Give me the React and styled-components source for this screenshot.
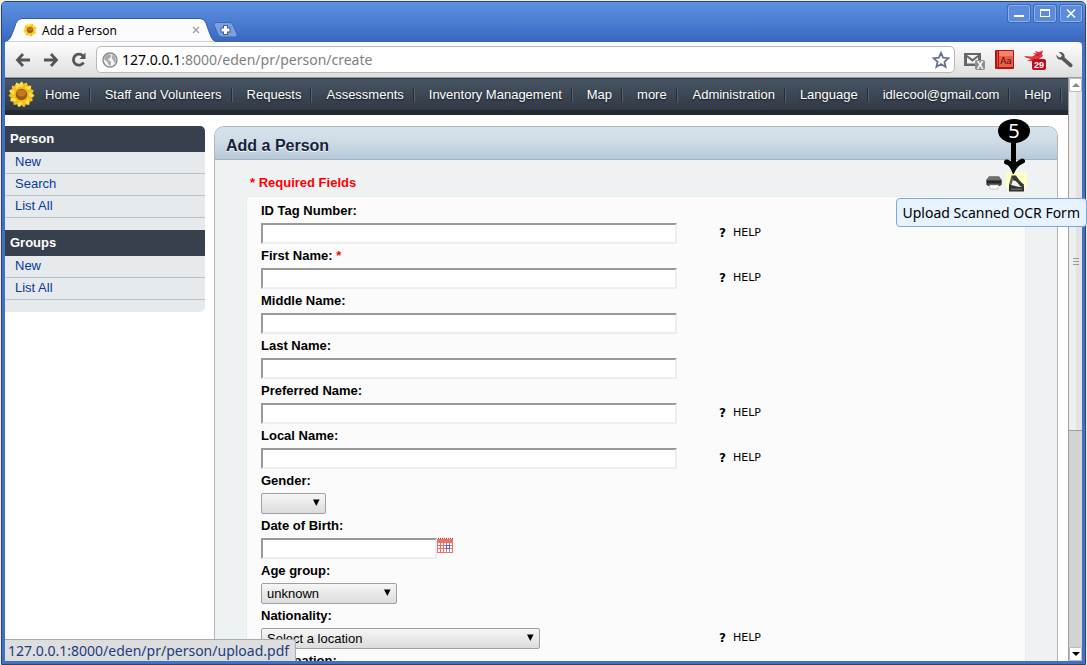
import React from 'react';
import styled, { createGlobalStyle } from 'styled-components';

const GlobalStyle = createGlobalStyle`
  * {
    box-sizing: border-box;
  }

  body {
    margin: 0;
    background: #ecebe6;
    color: #000;
    font-family: 'Liberation Sans', Arial, sans-serif;
    font-size: 13px;
  }

  button, input, select {
    margin: 0;
    padding: 0;
    font: inherit;
    color: inherit;
  }

  svg {
    display: block;
    flex: none;
  }
`;

/* ---------- browser window ---------- */

const Window = styled.div`
  position: relative;
  display: flex;
  flex-direction: column;
  height: 100vh;
  padding: 0 3px 3px;
  background: #4070c8;
  border: 1px solid #34445f;
  border-radius: 5px 5px 0 0;
  background-clip: padding-box;
`;

const Desktop = styled.div`
  height: 100vh;
  padding: 1px 1px 0;
  ${Window} {
    height: 100%;
  }
`;

const TitleBar = styled.div`
  display: flex;
  align-items: flex-end;
  height: 40px;
  margin: 0 -3px;
  padding-left: 3px;
  background: linear-gradient(#5d92e0, #4070c8 80%, #3a66ba);
  border-radius: 4px 4px 0 0;
`;

const Tab = styled.div`
  position: relative;
  display: flex;
  align-items: center;
  width: 211px;
  height: 24px;
  padding: 0 14px 0 18px;
  font-family: 'Noto Sans', sans-serif;
  font-size: 12px;
`;

const TabShape = styled.svg`
  position: absolute;
  left: 0;
  bottom: 0;
`;

const TabTitle = styled.span`
  position: relative;
  flex: 1;
  padding-left: 5px;
  white-space: nowrap;
`;

const TabIcon = styled.span`
  position: relative;
`;

const PlainButton = styled.button`
  display: flex;
  align-items: center;
  justify-content: center;
  background: none;
  border: 0;
  cursor: pointer;
`;

const TabClose = styled(PlainButton)`
  position: relative;
  width: 12px;
  height: 12px;
`;

const NewTab = styled(PlainButton)`
  align-self: flex-end;
  margin: 0 0 4px -4px;
`;

const WindowButtons = styled.div`
  display: flex;
  gap: 4px;
  align-self: flex-start;
  margin: 3px 3px 0 auto;
`;

const WindowButton = styled(PlainButton)`
  width: 22px;
  height: 17px;
  background: #5c8bdb;
  border: 1px solid #8db0ea;
  border-radius: 2px;
  box-shadow: 0 0 0 1px #3c68b8;
`;

const Toolbar = styled.div`
  display: flex;
  align-items: center;
  height: 36px;
  padding: 0 9px 0 10px;
  background: linear-gradient(#fdfdfd, #dedede);
  border-bottom: 1px solid #9a9fa8;
  border-radius: 0 4px 0 0;
`;

const NavButtons = styled.div`
  display: flex;
  gap: 12px;
`;

const AddressBar = styled.div`
  display: flex;
  flex: 1;
  align-items: center;
  height: 27px;
  margin: 0 9px;
  padding: 0 4px 0 5px;
  background: #fff;
  border: 1px solid #b9b9b9;
  border-radius: 5px;
  font-family: 'Noto Sans', sans-serif;
  font-size: 14px;
`;

const Url = styled.span`
  flex: 1;
  padding-left: 4px;
  line-height: 24px;
  color: #808080;

  b {
    color: #000;
    font-weight: normal;
  }
`;

const Extensions = styled.div`
  display: flex;
  align-items: center;
  gap: 10px;
`;

const Viewport = styled.div`
  display: flex;
  flex: 1;
  min-height: 0;
  background: #fff;
`;

const Page = styled.div`
  flex: 1;
  min-width: 0;
  overflow: hidden;
`;

const ScrollBar = styled.div`
  display: flex;
  flex-direction: column;
  width: 14px;
  background: #d3d3d3;
  border-left: 1px solid #a0a0a0;
`;

const ScrollArrow = styled(PlainButton)`
  height: 14px;
  background: #fff;
  border: 1px solid #bbb;
  border-radius: 2px;
`;

const ScrollTrack = styled.div`
  flex: 1;
`;

const ScrollThumb = styled.div`
  display: flex;
  align-items: center;
  justify-content: center;
  height: 61%;
  background: linear-gradient(90deg, #efefef 50%, #e3e3e3 50%);
  border-bottom: 1px solid #a0a0a0;
`;

const StatusBubble = styled.div`
  position: absolute;
  left: 3px;
  bottom: 3px;
  padding: 0 6px 0 3px;
  line-height: 21px;
  background: #dedede;
  border: solid #a7abb5;
  border-width: 1px 1px 0 0;
  border-radius: 0 3px 0 0;
  color: #1d3c7d;
  font-family: 'Noto Sans', sans-serif;
  font-size: 14px;
`;

const Tooltip = styled.div`
  position: absolute;
  top: 196px;
  right: -2px;
  padding: 0 6px;
  line-height: 27px;
  background: #e6f2fe;
  border: 1px solid #7ba7da;
  border-radius: 4px;
  font-family: 'Noto Sans', sans-serif;
  font-size: 14px;
  white-space: nowrap;
`;

const Marker = styled.svg`
  position: absolute;
  top: 116px;
  right: 54px;
`;

/* ---------- site menu ---------- */

const MenuBar = styled.nav`
  display: flex;
  align-items: center;
  height: 37px;
  padding: 0 6px 5px 3px;
  background: linear-gradient(#485564, #323945 31px, #232a32 31px);
  border-top: 1px solid #2c3440;
`;

const MenuGroup = styled.div`
  display: flex;

  &:last-child {
    margin-left: auto;
  }
`;

const MenuLink = styled.a`
  display: flex;
  align-items: center;
  padding-left: 14px;
  color: #fff;
  text-decoration: none;
  text-shadow: 0 1px 2px #11161c;
  white-space: nowrap;

  &::after {
    content: '';
    width: 2px;
    height: 14px;
    margin-left: 9px;
    background: linear-gradient(90deg, #252c36 50%, #56616e 50%);
  }
`;

const Logo = styled.a`
  margin-right: -4px;
`;

/* ---------- page content ---------- */

const Content = styled.div`
  display: flex;
  align-items: flex-start;
  gap: 9px;
  padding: 11px 10px 0 0;
`;

const SideMenu = styled.aside`
  flex: 0 0 200px;
  background: #e6eaed;
  border-radius: 0 5px 5px 0;
  overflow: hidden;
`;

const SideHeading = styled.h2`
  margin: 0;
  padding-left: 5px;
  background: #39404d;
  color: #fff;
  font-size: 13px;
  line-height: 26px;
`;

const SideList = styled.ul`
  margin: 0;
  padding: 0 0 12px;
  list-style: none;
`;

const SideItem = styled.li`
  padding-left: 10px;
  border-bottom: 1px solid #b3c1ca;
  line-height: 21px;

  a {
    display: block;
    margin-top: -1px;
    padding-bottom: 1px;
    color: #06399c;
    text-decoration: none;
  }
`;

const Panel = styled.main`
  flex: 1;
  min-width: 0;
  background: #eef2f3;
  border: solid #b3b5b6;
  border-width: 1px 1px 0;
  border-radius: 10px 10px 0 0;
`;

const PanelTitle = styled.h1`
  margin: 0;
  padding: 6px 0 0 11px;
  background: linear-gradient(#d7e3ec, #d0dde7 40%, #b8c9d7);
  border-bottom: 1px solid #9db3c6;
  border-radius: 9px 9px 0 0;
  color: #14213d;
  font-size: 16px;
  line-height: 26px;
  text-shadow: 0 1px 1px #fff;
`;

const FormHeader = styled.div`
  display: flex;
  align-items: center;
  justify-content: space-between;
  height: 36px;
  padding: 8px 30px 0 35px;
`;

const Required = styled.strong`
  color: #f00;
`;

const FormActions = styled.div`
  display: flex;
  align-items: flex-start;
  gap: 2px;
  height: 20px;
`;

const ActionLink = styled.a`
  display: block;
  height: 16px;
  padding: 3px 2px 0;
  background: ${(props) => (props.$active ? '#ffffc4' : 'transparent')};
`;

const Form = styled.form`
  margin: 0 31px;
  padding: 4px 14px 0;
  background: #fbfbfb;
  border: solid #e8ecec;
  border-width: 1px 1px 0;
`;

const Row = styled.div`
  display: grid;
  grid-template-columns: 458px 1fr;
  align-items: center;
  row-gap: 2px;
  padding-bottom: 2px;
`;

const Label = styled.label`
  grid-column: 1 / -1;
  font-weight: bold;
  line-height: 20px;
`;

const Control = styled.div`
  display: flex;
  align-items: flex-start;
`;

const TextInput = styled.input`
  width: ${(props) => props.$width}px;
  height: 21px;
  background: #fff;
  border: 2px solid;
  border-color: #999 #eee #eee #999;
`;

const SelectBox = styled.div`
  position: relative;
  width: ${(props) => props.$width}px;

  select {
    width: 100%;
    height: 21px;
    padding: 0 5px;
    appearance: none;
    background: linear-gradient(#f6f6f6, #dcdcdc);
    border: 1px solid #a0a0a0;
    border-radius: 2px;
    font-size: 13px;
  }

  svg {
    position: absolute;
    top: 6px;
    right: 6px;
    pointer-events: none;
  }
`;

const HelpLink = styled.a`
  display: flex;
  align-items: center;
  gap: 7px;
  padding-bottom: 2px;
  color: #000;
  font-family: 'DejaVu Sans', sans-serif;
  font-size: 11px;
  line-height: 16px;
  text-decoration: none;

  b {
    font-size: 12px;
  }
`;

/* ---------- drawings ---------- */

const Sunflower = ({ size }) => (
  <svg width={size} height={size} viewBox="0 0 28 28">
    {[0, 24, 48, 72, 96, 120, 144, 168, 192, 216, 240, 264, 288, 312, 336].map((angle, i) => (
      <path
        key={angle}
        d="M10.5 9 L12 2.5 L14 0.5 L16 2.5 L17.5 9Z"
        fill={i % 2 ? '#f3c21d' : '#ffe04a'}
        transform={`rotate(${angle} 14 14)`}
      />
    ))}
    <circle cx="14" cy="14" r="8" fill="#f2bd1c" />
    <circle cx="14" cy="14" r="6" fill="#9c5a12" />
    <ellipse cx="14" cy="12.5" rx="4.5" ry="3.5" fill="#c07a22" />
  </svg>
);

const BackIcon = () => (
  <svg width="16" height="16" viewBox="0 0 16 16" fill="none" stroke="#555" strokeWidth="2.8">
    <path d="M8 2 L2.5 8 L8 14 M2.5 8 H15" />
  </svg>
);

const ForwardIcon = () => (
  <svg width="16" height="16" viewBox="0 0 16 16" fill="none" stroke="#555" strokeWidth="2.8">
    <path d="M8 2 L13.5 8 L8 14 M13.5 8 H1" />
  </svg>
);

const ReloadIcon = () => (
  <svg width="16" height="16" viewBox="0 0 16 16">
    <path d="M12 4 A5.5 5.5 0 1 0 12.6 10.5" fill="none" stroke="#555" strokeWidth="2.8" />
    <path d="M14.5 0.5 V7 H8.5Z" fill="#555" />
  </svg>
);

const GlobeIcon = () => (
  <svg width="16" height="16" viewBox="0 0 16 16">
    <circle cx="8" cy="8" r="7" fill="#f2f2f2" stroke="#8a8a8a" strokeWidth="1.4" />
    <path d="M3 3.5 L7.5 2 L9.5 4 L7.5 6.5 L5.5 7 L8 9 L9 10 L8.5 14 L6.5 12.5 L5 9.5 L2 7Z" fill="#ababab" />
    <path d="M10.5 2.5 L13.5 5 L14 9.5 L12.5 11 L11.5 8.5 L9.8 6.5Z" fill="#ababab" />
  </svg>
);

const StarIcon = () => (
  <svg width="18" height="18" viewBox="0 0 18 18">
    <path
      d="M9 1.8 L11.1 6.7 L16.4 7.2 L12.4 10.7 L13.6 15.9 L9 13.1 L4.4 15.9 L5.6 10.7 L1.6 7.2 L6.9 6.7Z"
      fill="#fff"
      stroke="#66728c"
      strokeWidth="1.8"
    />
  </svg>
);

const MailIcon = () => (
  <svg width="21" height="20" viewBox="0 0 21 20">
    <path d="M0 3 H17 V16 H0Z" fill="#666" />
    <path d="M3 5.5 L8.5 10.5 L14 5.5 V13.5 H3Z" fill="#f4f4f4" />
    <path d="M3 6 L8.5 10.5 L14 6" fill="none" stroke="#666" strokeWidth="2" />
    <path d="M3 5 H14 L8.5 9Z" fill="#f4f4f4" />
    <rect x="11" y="10" width="10" height="10" rx="2" fill="#8e8e8e" />
    <text x="16" y="19" textAnchor="middle" fill="#fff" fontFamily="Liberation Sans" fontWeight="bold" fontSize="10">
      X
    </text>
  </svg>
);

const DictionaryIcon = () => (
  <svg width="19" height="19" viewBox="0 0 19 19">
    <rect width="19" height="19" rx="1" fill="#b81414" />
    <rect x="4" y="1" width="14" height="16" fill="#e65f48" />
    <rect x="4" y="1" width="14" height="5" fill="#f58468" />
    <path d="M2.5 1 V17" stroke="#e8513e" />
    <text x="11" y="14" textAnchor="middle" fill="#5a0808" fontFamily="DejaVu Sans" fontSize="9">
      Aa
    </text>
  </svg>
);

const BirdIcon = () => (
  <svg width="22" height="20" viewBox="0 0 22 20">
    <path
      d="M0 6 L8 6.5 L11 5 L9 3 L12.5 3.5 L11 1 L15 2 L19 0.5 L18 4 L19 6 L15 9 L11 11.5 L3 11 L7 9 L2.5 8Z"
      fill="#dc3a3f"
    />
    <path d="M11 5 L17 3 L14 6Z" fill="#b81e28" />
    <rect x="8" y="9" width="14" height="11" rx="2" fill="#c00d22" />
    <text x="15" y="18" textAnchor="middle" fill="#fff" fontFamily="Liberation Sans" fontWeight="bold" fontSize="9">
      29
    </text>
  </svg>
);

const WrenchIcon = () => (
  <svg width="17" height="17" viewBox="0 0 17 17">
    <path
      d="M2.6 1 L6 4.2 L5 6 L3 6.4 L0.3 3.8 C0.4 7 2 9 5.5 8.8 L13 15.6 A1.8 1.8 0 0 0 16 13 L8.6 6.4 C9.2 3 6.5 0.3 2.6 1Z"
      fill="#575757"
    />
  </svg>
);

const PrinterIcon = () => (
  <svg width="16" height="15" viewBox="0 0 16 15">
    <path d="M3 1.5 H13 L15.8 5 V9.5 L14 11 H2 L0.2 9.5 V5Z" fill="#4a4a4a" />
    <path d="M3 1.5 H13 L15 5 H1Z" fill="#707070" />
    <path d="M1 7 H15" stroke="#262626" strokeWidth="2.4" />
    <path d="M3.5 10 H12.5 L12 14 H4Z" fill="#fff" stroke="#aaa" strokeWidth="0.6" />
  </svg>
);

const ScannerIcon = () => (
  <svg width="17" height="17" viewBox="0 0 17 17">
    <path d="M4.5 5 L12 10 L13 12.5 L2.5 11Z" fill="#f0f0f0" />
    <path d="M3.5 0.5 L8 0.5 C10 4 13 7.5 16 9.5 L15.5 12 L12 11 C10 7.5 7.5 5.5 4.5 5Z" fill="#383838" />
    <path d="M3.5 0.5 L5 5 L3 10.5 L1 10Z" fill="#5a5a5a" />
    <path d="M1 9.5 L11.5 12 L16 11 V16.5 H1Z" fill="#303030" />
    <path d="M3 14.2 H14" stroke="#808080" />
  </svg>
);

const CalendarIcon = () => (
  <svg width="16" height="15" viewBox="0 0 16 15" shapeRendering="crispEdges">
    <path d="M0 1 H16 V15 H0Z" fill="#e9726b" />
    <path d="M1 0.5 H16" stroke="#a83c38" strokeDasharray="1 1" />
    <path d="M1 5 H15 V14 H1Z" fill="#fff" />
    <path d="M1 7.5 H15 M1 10.5 H15 M3.5 5 V14 M6.5 5 V14 M9.5 5 V14 M12.5 5 V14" stroke="#e9726b" />
    <rect x="9.5" y="7.5" width="3" height="3" fill="#fff" stroke="#2b6fe0" />
  </svg>
);

const Triangle = ({ color = '#000' }) => (
  <svg width="8" height="7" viewBox="0 0 8 7">
    <path d="M1 0.5 H7.6 L4.3 7Z" fill={color} />
  </svg>
);

const ScrollTriangle = ({ up, color = '#000' }) => (
  <svg width="8" height="4" viewBox="0 0 8 4">
    <path d={up ? 'M0 4 L4 0 L8 4Z' : 'M0 0 H8 L4 4Z'} fill={color} />
  </svg>
);

/* ---------- data ---------- */

const mainMenu = [
  'Home',
  'Staff and Volunteers',
  'Requests',
  'Assessments',
  'Inventory Management',
  'Map',
  'more',
];

const userMenu = ['Administration', 'Language', 'idlecool@gmail.com', 'Help'];

const sideMenu = [
  { title: 'Person', links: ['New', 'Search', 'List All'] },
  { title: 'Groups', links: ['New', 'List All'] },
];

const fields = [
  { id: 'pe_label', label: 'ID Tag Number:', width: 416, help: true },
  { id: 'first_name', label: 'First Name:', width: 416, help: true, required: true },
  { id: 'middle_name', label: 'Middle Name:', width: 416 },
  { id: 'last_name', label: 'Last Name:', width: 416 },
  { id: 'preferred_name', label: 'Preferred Name:', width: 416, help: true },
  { id: 'local_name', label: 'Local Name:', width: 416, help: true },
  { id: 'gender', label: 'Gender:', type: 'select', width: 65, value: '' },
  { id: 'date_of_birth', label: 'Date of Birth:', type: 'date', width: 176 },
  { id: 'age_group', label: 'Age group:', type: 'select', width: 136, value: 'unknown' },
  { id: 'nationality', label: 'Nationality:', type: 'select', width: 279, value: 'Select a location', help: true },
  { id: 'occupation', label: 'Occupation:', width: 416 },
];

const Field = ({ field }) => (
  <Row>
    <Label htmlFor={field.id}>
      {field.label} {field.required && <Required>*</Required>}
    </Label>
    <Control>
      {field.type === 'select' ? (
        <SelectBox $width={field.width}>
          <select id={field.id}>
            <option>{field.value}</option>
          </select>
          <Triangle />
        </SelectBox>
      ) : (
        <TextInput id={field.id} type="text" $width={field.width} />
      )}
      {field.type === 'date' && (
        <PlainButton type="button" aria-label="Pick a date">
          <CalendarIcon />
        </PlainButton>
      )}
    </Control>
    {field.help && (
      <HelpLink href="#help">
        <b>?</b> HELP
      </HelpLink>
    )}
  </Row>
);

const Menu = ({ items }) => (
  <MenuGroup>
    {items.map((item) => (
      <MenuLink key={item} href="#menu">
        {item}
      </MenuLink>
    ))}
  </MenuGroup>
);

const App = () => {
  return (
    <Desktop>
      <GlobalStyle />
      <Window>
        <TitleBar>
          <Tab>
            <TabShape width="211" height="24" viewBox="0 0 211 24">
              <path
                d="M0 24 C6 22 7 16 11 5 Q13 0.5 17 0.5 H194 Q199 0.5 201 5 C205 16 206 22 211 24Z"
                fill="#fcfcfc"
                stroke="#315ba8"
              />
              <path d="M1 24 H210" stroke="#fcfcfc" />
            </TabShape>
            <TabIcon>
              <Sunflower size={14} />
            </TabIcon>
            <TabTitle>Add a Person</TabTitle>
            <TabClose aria-label="Close tab">
              <svg width="8" height="8" viewBox="0 0 8 8">
                <path d="M1 1 L7 7 M7 1 L1 7" stroke="#a5a5a5" strokeWidth="1.5" />
              </svg>
            </TabClose>
          </Tab>
          <NewTab aria-label="New tab">
            <svg width="26" height="16" viewBox="0 0 26 16">
              <path
                d="M4 0.5 H18 Q20 0.5 21 3 L25 12 Q26 15 23 15 H10 Q7 15 6 12 L2 3 Q1 0.5 4 0.5Z"
                fill="#7c9fe0"
                stroke="#4166b0"
              />
              <path d="M13.5 3 V13 M8.5 8 H18.5" stroke="#3a60aa" strokeWidth="5" />
              <path d="M13.5 4 V12 M9.5 8 H17.5" stroke="#fff" strokeWidth="3" />
            </svg>
          </NewTab>
          <WindowButtons>
            <WindowButton aria-label="Minimize">
              <svg width="12" height="11" viewBox="0 0 12 11">
                <path d="M1 8 H11" stroke="#fff" strokeWidth="2" />
              </svg>
            </WindowButton>
            <WindowButton aria-label="Maximize">
              <svg width="12" height="11" viewBox="0 0 12 11" fill="none" stroke="#fff">
                <rect x="1.5" y="1.5" width="9" height="7" />
                <path d="M1 2.5 H11" />
              </svg>
            </WindowButton>
            <WindowButton aria-label="Close">
              <svg width="12" height="11" viewBox="0 0 12 11">
                <path d="M2 1.5 L10 9.5 M10 1.5 L2 9.5" stroke="#fff" strokeWidth="1.6" />
              </svg>
            </WindowButton>
          </WindowButtons>
        </TitleBar>

        <Toolbar>
          <NavButtons>
            <PlainButton aria-label="Back">
              <BackIcon />
            </PlainButton>
            <PlainButton aria-label="Forward">
              <ForwardIcon />
            </PlainButton>
            <PlainButton aria-label="Reload">
              <ReloadIcon />
            </PlainButton>
          </NavButtons>
          <AddressBar>
            <GlobeIcon />
            <Url>
              <b>127.0.0.1</b>:8000/eden/pr/person/create
            </Url>
            <PlainButton aria-label="Bookmark this page">
              <StarIcon />
            </PlainButton>
          </AddressBar>
          <Extensions>
            <MailIcon />
            <DictionaryIcon />
            <BirdIcon />
            <PlainButton aria-label="Settings">
              <WrenchIcon />
            </PlainButton>
          </Extensions>
        </Toolbar>

        <Viewport>
          <Page>
            <MenuBar>
              <Logo href="#home" aria-label="Eden">
                <Sunflower size={27} />
              </Logo>
              <Menu items={mainMenu} />
              <Menu items={userMenu} />
            </MenuBar>
            <Content>
              <SideMenu>
                {sideMenu.map((section) => (
                  <React.Fragment key={section.title}>
                    <SideHeading>{section.title}</SideHeading>
                    <SideList>
                      {section.links.map((link) => (
                        <SideItem key={link}>
                          <a href="#link">{link}</a>
                        </SideItem>
                      ))}
                    </SideList>
                  </React.Fragment>
                ))}
              </SideMenu>
              <Panel>
                <PanelTitle>Add a Person</PanelTitle>
                <FormHeader>
                  <Required>* Required Fields</Required>
                  <FormActions>
                    <ActionLink href="#print" aria-label="Print form">
                      <PrinterIcon />
                    </ActionLink>
                    <ActionLink href="#upload" aria-label="Upload form" $active>
                      <ScannerIcon />
                    </ActionLink>
                  </FormActions>
                </FormHeader>
                <Form>
                  {fields.map((field) => (
                    <Field key={field.id} field={field} />
                  ))}
                </Form>
              </Panel>
            </Content>
          </Page>
          <ScrollBar>
            <ScrollArrow aria-label="Scroll up">
              <ScrollTriangle up color="#888" />
            </ScrollArrow>
            <ScrollTrack>
              <ScrollThumb>
                <svg width="6" height="8" viewBox="0 0 6 8">
                  <path d="M0 1.5 H6 M0 4.5 H6 M0 7.5 H6" stroke="#999" />
                </svg>
              </ScrollThumb>
            </ScrollTrack>
            <ScrollArrow aria-label="Scroll down">
              <ScrollTriangle />
            </ScrollArrow>
          </ScrollBar>
        </Viewport>

        <StatusBubble>127.0.0.1:8000/eden/pr/person/upload.pdf</StatusBubble>
        <Tooltip role="tooltip">Upload Scanned OCR Form</Tooltip>
        <Marker width="34" height="56" viewBox="0 0 34 56">
          <ellipse cx="17" cy="13" rx="16" ry="12" fill="#000" />
          <path d="M16.5 22 V48 M9.5 44 Q14 45 16.5 51 Q19 46 25.5 43" fill="none" stroke="#000" strokeWidth="5" strokeLinecap="round" />
          <text x="17" y="20" textAnchor="middle" fill="#fff" fontFamily="Noto Sans" fontSize="20">
            5
          </text>
        </Marker>
      </Window>
    </Desktop>
  );
};

export default App;
